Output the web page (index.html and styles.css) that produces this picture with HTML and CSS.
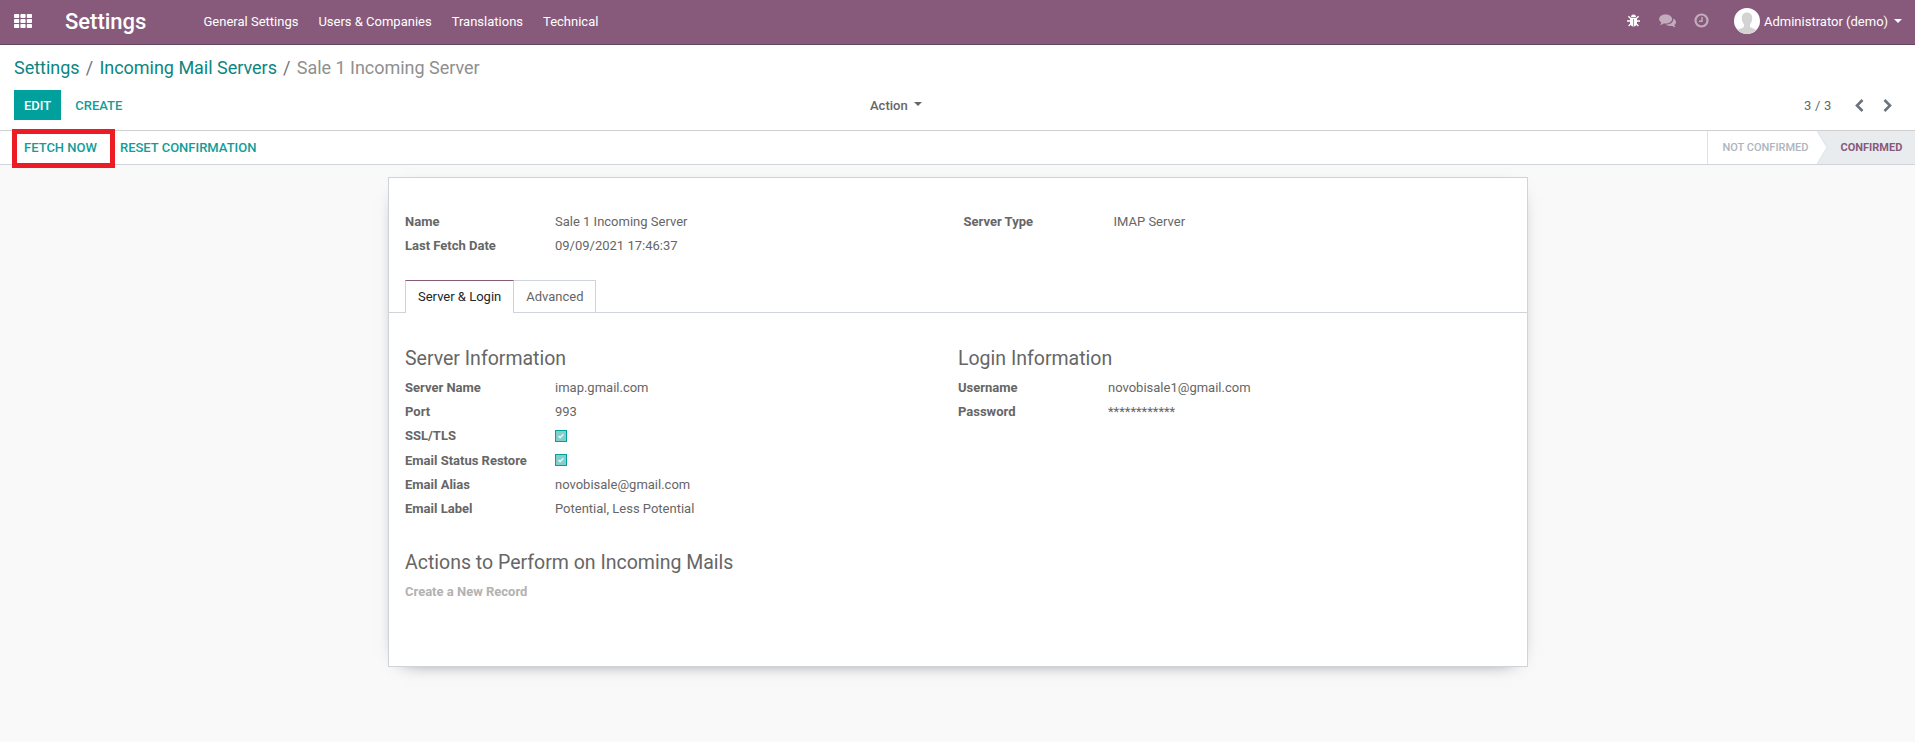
FILE: index.html
```html
<!DOCTYPE html>
<html lang="en">
<head>
<meta charset="utf-8">
<title>Sale 1 Incoming Server - Settings</title>
<link rel="stylesheet" href="styles.css">
</head>
<body>
<header class="navbar">
  <svg class="apps" width="18" height="14" viewBox="0 0 18 14" fill="#fff"><rect x="0" y="0" width="5.2" height="4" rx=".8"/><rect x="6.4" y="0" width="5.2" height="4" rx=".8"/><rect x="12.8" y="0" width="5.2" height="4" rx=".8"/><rect x="0" y="5" width="5.2" height="4" rx=".8"/><rect x="6.4" y="5" width="5.2" height="4" rx=".8"/><rect x="12.8" y="5" width="5.2" height="4" rx=".8"/><rect x="0" y="10" width="5.2" height="4" rx=".8"/><rect x="6.4" y="10" width="5.2" height="4" rx=".8"/><rect x="12.8" y="10" width="5.2" height="4" rx=".8"/></svg>
  <span class="brand">Settings</span>
  <nav class="menu"><a>General Settings</a><a>Users &amp; Companies</a><a>Translations</a><a>Technical</a></nav>
  <div class="systray">
    <svg class="bug" width="13" height="13" viewBox="0 0 13 13"><path d="M4 3a2.500 2.500 0 0 1 5 0z" fill="#fff"/><path d="M3 3.800h7v5.400c0 1.800-1.500 3.200-3.500 3.200S3 11 3 9.200z" fill="#fff"/><path d="M1.400 2.200l2 2M11.600 2.200l-2 2M0 7h3.500M9.500 7H13M1.600 12l2.200-2.300M11.400 12L9.200 9.700" stroke="#fff" stroke-width="1.300"/><path d="M6.500 5v7" stroke="#b58bb0" stroke-width="1"/></svg>
    <svg class="chat" width="17" height="14" viewBox="0 0 17 14" fill="#c3adbd"><path d="M6.600.4C3 .4.1 2.400.1 5c0 1.500.9 2.700 2.300 3.600-.2.800-.7 1.400-1.300 2 .1.400 2.200-.1 3.600-1.200.6.100 1.200.2 1.900.2 3.600 0 6.500-2 6.500-4.600S10.200.4 6.600.4z"/><path d="M14.300 4.400c.5 3.500-3 6.200-7.500 6.200 1 1 2.700 1.500 4.500 1.400.6 0 1.100-.1 1.600-.2 1.200.9 2.700 1.400 3.400 1.200.2-.1-.8-.9-1-2 1-.7 1.700-1.600 1.700-2.800 0-1.600-1.100-3-2.700-3.800z"/></svg>
    <svg class="clock" width="15" height="15" viewBox="0 0 15 15" fill="none" stroke="#c3adbd"><circle cx="7.500" cy="7.500" r="6" stroke-width="2.200"/><path d="M8 4v4.300H5" stroke-width="1.400"/></svg>
    <svg class="avatar" width="26" height="26" viewBox="0 0 26 26"><defs><clipPath id="round"><circle cx="13" cy="13" r="13"/></clipPath></defs><g clip-path="url(#round)"><rect width="26" height="26" fill="#fff"/><path d="M13 4.500c-3.400 0-5.200 2.300-5.200 5.600 0 2.700.8 4.900 2.200 6.300v2.400c-1 1.500-5.200 1.600-6.500 3.700V26h19v-3.500c-1.300-2.100-5.500-2.200-6.500-3.700v-2.400c1.400-1.400 2.200-3.600 2.200-6.300 0-3.300-1.800-5.600-5.200-5.600z" fill="#d3d3d3"/></g></svg>
    <span class="user">Administrator (demo)</span><i class="caret"></i>
  </div>
</header>

<section class="control">
  <div class="crumbs"><a>Settings</a><span class="sep">/</span><a>Incoming Mail Servers</a><span class="sep">/</span><span class="here">Sale 1 Incoming Server</span></div>
  <div class="buttons">
    <div class="left"><button class="btn primary">EDIT</button><button class="btn">CREATE</button></div>
    <div class="action">Action<i class="caret"></i></div>
    <div class="pager"><span>3 / 3</span>
      <svg width="9" height="13" viewBox="0 0 9 13"><path d="M7.500 1L2 6.500 7.500 12" fill="none" stroke="#6a737b" stroke-width="2.600"/></svg>
      <svg width="9" height="13" viewBox="0 0 9 13"><path d="M1.500 1L7 6.500 1.500 12" fill="none" stroke="#6a737b" stroke-width="2.600"/></svg>
    </div>
  </div>
</section>

<section class="statusbar">
  <div class="ops"><button class="btn fetch">FETCH NOW<i class="highlight"></i></button><button class="btn">RESET CONFIRMATION</button></div>
  <div class="stages"><span class="stage">NOT CONFIRMED</span><svg class="arrow" width="11" height="33" viewBox="0 0 11 33"><path d="M0 0h11v33H0l10-16.500z" fill="#e9ecef"/><path d="M0 0l10 16.500L0 33" fill="none" stroke="#dee2e6"/></svg><span class="stage current">CONFIRMED</span></div>
</section>

<main class="sheet">
  <div class="cols head">
    <dl><dt>Name</dt><dd>Sale 1 Incoming Server</dd><dt>Last Fetch Date</dt><dd>09/09/2021 17:46:37</dd></dl>
    <dl class="second"><dt>Server Type</dt><dd>IMAP Server</dd></dl>
  </div>
  <div class="tabs"><a class="tab active">Server &amp; Login</a><a class="tab">Advanced</a></div>
  <div class="cols page">
    <div>
      <h2>Server Information</h2>
      <dl><dt>Server Name</dt><dd>imap.gmail.com</dd><dt>Port</dt><dd>993</dd>
        <dt>SSL/TLS</dt><dd><svg class="check" width="12" height="12" viewBox="0 0 12 12"><rect x=".5" y=".5" width="11" height="11" fill="#80cfcd" stroke="#00a09d"/><path d="M3.500 6.200l1.600 1.500 3.300-3.400" fill="none" stroke="#e4f3f3" stroke-width="1.600"/></svg></dd>
        <dt class="low">Email Status Restore</dt><dd><svg class="check" width="12" height="12" viewBox="0 0 12 12"><rect x=".5" y=".5" width="11" height="11" fill="#80cfcd" stroke="#00a09d"/><path d="M3.500 6.200l1.600 1.500 3.300-3.400" fill="none" stroke="#e4f3f3" stroke-width="1.600"/></svg></dd>
        <dt class="low">Email Alias</dt><dd class="low">novobisale@gmail.com</dd><dt class="low">Email Label</dt><dd class="low">Potential, Less Potential</dd></dl>
    </div>
    <div>
      <h2>Login Information</h2>
      <dl><dt>Username</dt><dd>novobisale1@gmail.com</dd><dt>Password</dt><dd>************</dd></dl>
    </div>
  </div>
  <div class="actions"><h2>Actions to Perform on Incoming Mails</h2><div class="empty">Create a New Record</div></div>
</main>
</body>
</html>
```
FILE: styles.css
```css
* { box-sizing: border-box; }
body { margin: 0; height: 742px; overflow: hidden; background: #f9f9f9; color: #666; font: 13px/20px Roboto, sans-serif; }
svg { display: block; flex: none; }
.caret { display: inline-block; border: 4px solid transparent; border-top-color: currentColor; border-bottom: 0; }
.navbar { display: flex; align-items: center; height: 45px; padding: 0 13px 3px 14px; background: #875a7b; border-bottom: 1px solid #68465f; color: #fff; }
.brand { margin-left: 33px; width: 129px; padding-top: 2px; font-size: 22px; line-height: 26px; font-weight: 500; white-space: nowrap; }
.menu { display: flex; margin-left: 9.500px; gap: 20px; }
.menu a, .user { font-weight: 400; padding-top: 2px; }
.systray { display: flex; align-items: center; margin-left: auto; }
.chat { margin-left: 19px; }
.clock { margin-left: 18px; }
.avatar { margin: 1px 4px 0 25px; }
.user { width: 124px; margin-right: 6px; white-space: nowrap; }

.control { height: 86px; padding: 9px 0 0 14px; background: #fff; border-bottom: 1px solid #cfcfcf; }
.crumbs { display: flex; height: 27px; line-height: 27px; font-size: 18px; letter-spacing: -.02px; }
.crumbs a { color: #0c8582; }
.sep { padding: 0 6.200px; color: #6c757d; }
.here { color: #8f8f8f; }
.buttons { display: flex; align-items: center; margin-top: 9px; height: 30px; }
.left { width: 856px; display: flex; gap: 4px; }
.btn { position: relative; height: 30px; padding: 0 10px; border: 0; background: none; color: #0f9d9a; font: 500 13px/30px Roboto, sans-serif; white-space: nowrap; }
.left .btn { padding-top: 1px; }
.left .primary { background: #00a09d; color: #fff; }
.action { display: flex; align-items: center; padding-top: 1px; font-weight: 500; }
.action .caret { margin: -4px 0 0 6px; }
.pager { display: flex; align-items: center; margin-left: auto; padding-right: 23.500px; }
.pager span { margin-right: 23px; padding-top: 1px; letter-spacing: .2px; }
.pager svg + svg { margin-left: 19px; }

.statusbar { display: flex; justify-content: space-between; height: 34px; padding-left: 14px; background: #fff; border-bottom: 1px solid #ced4da; }
.ops { display: flex; gap: 3px; align-items: center; }
.highlight { position: absolute; left: -2px; top: -4px; width: 103px; height: 39px; border: 5px solid #ed1c24; }
.stages { display: flex; font-size: 11px; font-weight: 500; line-height: 33px; white-space: nowrap; }
.stage { width: 110px; padding-left: 14.500px; border-left: 1px solid #dee2e6; color: #adb5bd; }
.current { width: 87px; padding-left: 12.500px; border: 0; background: #e9ecef; color: #875a7b; font-weight: 700; }

.sheet { width: 1140px; height: 490px; margin: 12px 0 0 388px; padding-top: 32px; background: #fff; border: 1px solid #ced4da; box-shadow: 0 5px 20px -15px #000; }
.cols { display: grid; grid-template-columns: 553px 1fr; padding-left: 16px; }
.head { height: 70px; grid-template-columns: 558.500px 1fr; }
dl { display: grid; grid-template-columns: 150px 1fr; grid-auto-rows: 24px; margin: 0; line-height: 24px; }
dt { font-weight: 700; }
dd { margin: 0; }
.low { padding-top: 1px; }
dt.low { padding-top: .6px; }
.check { margin-top: 6px; }
.tabs { display: flex; height: 33px; padding-left: 16px; border-bottom: 1px solid #ced4da; }
.tab { height: 32px; padding: 0 12px; line-height: 32px; border: 1px solid #ced4da; border-left: 0; border-bottom: 0; }
.tab + .tab { padding-right: 11.500px; }
.tab.active { height: 33px; border-left: 1px solid #ced4da; border-top-color: #875a7b; background: #fff; color: #212529; }
.page { padding-top: 30px; }
h2 { margin: 0; height: 33px; padding-top: 1px; font-size: 19.500px; line-height: 30px; font-weight: 400; }
.actions { padding: 27px 0 0 16px; }
.empty { font-weight: 700; color: #b2b2b2; line-height: 24px; }
```
